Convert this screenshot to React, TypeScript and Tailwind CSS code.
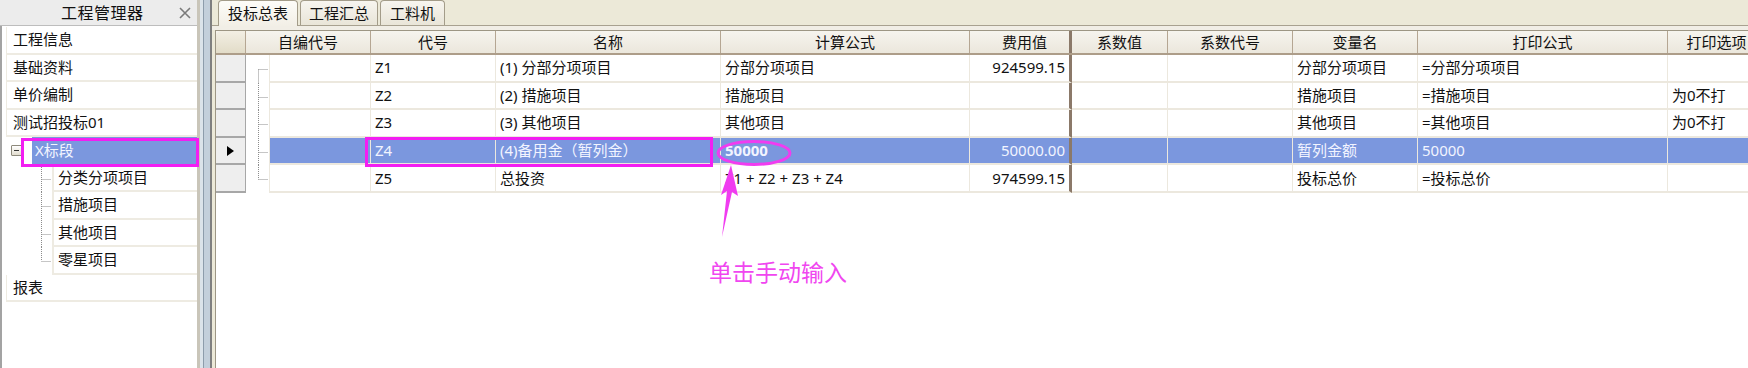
import React from "react";

type Row = {
  code: string;
  name: string;
  formula: string;
  value: string;
  varName: string;
  print: string;
  opt: string;
  sel?: boolean;
};

const rows: Row[] = [
  { code: "Z1", name: "(1) 分部分项项目", formula: "分部分项项目", value: "924599.15", varName: "分部分项项目", print: "=分部分项项目", opt: "" },
  { code: "Z2", name: "(2) 措施项目", formula: "措施项目", value: "", varName: "措施项目", print: "=措施项目", opt: "为0不打" },
  { code: "Z3", name: "(3) 其他项目", formula: "其他项目", value: "", varName: "其他项目", print: "=其他项目", opt: "为0不打" },
  { code: "Z4", name: "(4)备用金（暂列金）", formula: "50000", value: "50000.00", varName: "暂列金额", print: "50000", opt: "", sel: true },
  { code: "Z5", name: "总投资", formula: "Z1 + Z2 + Z3 + Z4", value: "974599.15", varName: "投标总价", print: "=投标总价", opt: "" },
];

const cellBase = "flex h-full shrink-0 items-center overflow-hidden whitespace-nowrap border-r border-b-2 border-[#ece8de] px-[4px]";

function TreeCell({ idx, total }: { idx: number; total: number }) {
  const mid = 14.5;
  return (
    <div className="relative h-full w-[24px] shrink-0 border-r border-[#ece8de] bg-white">
      <svg width="24" height="28" className="absolute left-0 top-0 overflow-visible">
        <line x1="12.5" y1={idx === 0 ? mid : 0} x2="12.5" y2={idx === total - 1 ? mid : 28} stroke="#8c8c8c" strokeWidth="1" strokeDasharray="1 1" />
        <line x1="12.5" y1={mid} x2="22" y2={mid} stroke="#8c8c8c" strokeWidth="1" strokeDasharray="1 1" />
      </svg>
    </div>
  );
}

function LeftRow({ children }: { children: React.ReactNode }) {
  return (
    <div className="flex h-[27.5px] items-center border-b-2 border-l border-[#eeebe2] bg-white pl-[6px]">
      {children}
    </div>
  );
}

function ChildRow({ children, idx, total }: { children: React.ReactNode; idx: number; total: number }) {
  return (
    <div className="flex h-[27.5px] bg-white">
      <div className="relative h-full w-[46px] shrink-0">
        <svg width="46" height="28" className="absolute left-0 top-0 overflow-visible">
          <line x1="35.5" y1="0" x2="35.5" y2={idx === total - 1 ? 14 : 28} stroke="#8c8c8c" strokeDasharray="1 1" />
          <line x1="35.5" y1="14.5" x2="45" y2="14.5" stroke="#8c8c8c" strokeDasharray="1 1" />
        </svg>
      </div>
      <div className="flex h-full flex-1 items-center border-b-2 border-l-2 border-[#eeebe2] pl-[4px]">{children}</div>
    </div>
  );
}

function LeftPane() {
  const kids = ["分类分项项目", "措施项目", "其他项目", "零星项目"];
  return (
    <div className="flex h-full w-[200px] shrink-0 flex-col border-r-[3px] border-[#c9c5b9] bg-white">
      <div className="flex h-[26px] shrink-0 items-center border-b border-[#bdbdbd] bg-[#ececec] pl-[61px] pr-[5px]">
        <span className="text-[16px] leading-none tracking-[0.5px] text-[#111]">工程管理器</span>
        <svg width="12" height="12" viewBox="0 0 12 12" className="ml-auto mr-[1px]">
          <path d="M1 1 L11 11 M11 1 L1 11" stroke="#7a7a7a" strokeWidth="1.6" />
        </svg>
      </div>
      <div className="flex flex-1 flex-col border-l-2 border-[#a3a3a3] pl-[4px] pt-px">
        <LeftRow>工程信息</LeftRow>
        <LeftRow>基础资料</LeftRow>
        <LeftRow>单价编制</LeftRow>
        <LeftRow>测试招投标01</LeftRow>
        <div className="flex h-[27.5px] items-center bg-white">
          <div className="relative flex h-full w-[24px] shrink-0 items-center">
            <div className="ml-[5px] flex h-[11px] w-[11px] items-center justify-center rounded-[1px] border border-[#8e8a7c] bg-gradient-to-b from-[#ffffff] to-[#e2ddcf]">
              <div className="h-px w-[5px] bg-[#333]" />
            </div>
          </div>
          <div className="flex h-full flex-1 items-center border-l-2 border-white bg-[#7b97de] pl-[3px] text-[#f3f5ff]">X标段</div>
        </div>
        {kids.map((k, i) => (
          <ChildRow key={k} idx={i} total={kids.length}>
            {k}
          </ChildRow>
        ))}
        <LeftRow>报表</LeftRow>
      </div>
    </div>
  );
}

function Splitter() {
  return (
    <div className="flex h-full w-[12px] shrink-0">
      <div className="h-full w-[3px] bg-[#dbe3ea]" />
      <div className="h-full w-px bg-[#8d9cab]" />
      <div className="h-full w-[6px] bg-[#c3cfdb]" />
      <div className="h-full w-[2px] bg-[#7f7f7f]" />
    </div>
  );
}

function HeaderCell({ w, children, thick }: { w: string; children?: React.ReactNode; thick?: boolean }) {
  return (
    <div
      className={`flex h-full shrink-0 items-center justify-center whitespace-nowrap ${w} ${
        thick ? "border-r-[3px] border-[#8b7969]" : "border-r border-[#b5a692]"
      }`}
    >
      {children}
    </div>
  );
}

function Grid() {
  return (
    <div className="ml-[3px] flex flex-1 flex-col border-l border-t border-[#9d9684] bg-white">
      <div className="flex h-[24px] shrink-0 border-b-2 border-[#ad9d89] bg-gradient-to-b from-[#f6f4ee] to-[#ebe7dc]">
        <div className="h-full w-[30px] shrink-0 rounded-tl-[5px] border-r border-[#b5a692] bg-gradient-to-b from-[#f3efe4] to-[#e2dcc8]" />
        <HeaderCell w="w-[125px]">自编代号</HeaderCell>
        <HeaderCell w="w-[125px]">代号</HeaderCell>
        <HeaderCell w="w-[225px]">名称</HeaderCell>
        <HeaderCell w="w-[249px]">计算公式</HeaderCell>
        <HeaderCell w="w-[102px]" thick>
          <span className="pl-[10px]">费用值</span>
        </HeaderCell>
        <HeaderCell w="w-[96px]">系数值</HeaderCell>
        <HeaderCell w="w-[125px]">系数代号</HeaderCell>
        <HeaderCell w="w-[125px]">变量名</HeaderCell>
        <HeaderCell w="w-[250px]">打印公式</HeaderCell>
        <HeaderCell w="w-[98px]">打印选项</HeaderCell>
      </div>
      {rows.map((r, i) => {
        const bg = r.sel ? "bg-[#7b97de] text-[#f2f4ff]" : "bg-white";
        return (
          <div key={r.code} className="flex h-[27.6px] shrink-0">
            <div className="relative flex h-full w-[30px] shrink-0 items-center justify-center border-b-2 border-r border-[#a7a7a7] bg-[#eeeeee]">
              {r.sel && (
                <svg width="7" height="10" viewBox="0 0 7 10">
                  <path d="M0 0 L7 5 L0 10 Z" fill="#000" />
                </svg>
              )}
            </div>
            <TreeCell idx={i} total={rows.length} />
            <div className={`${cellBase} w-[101px] ${bg}`} />
            <div className={`${cellBase} w-[125px] ${bg}`}>{r.code}</div>
            <div className={`${cellBase} w-[225px] ${bg}`}>{r.name}</div>
            <div className={`${cellBase} w-[249px] ${bg} ${r.sel ? "font-bold" : ""}`}>{r.formula}</div>
            <div className={`flex h-full w-[102px] shrink-0 items-center justify-end border-b-2 border-r-[3px] border-b-[#ece8de] border-r-[#8b7969] pr-[4px] ${bg} ${r.sel ? "text-[#dfe6fb]" : ""}`}>
              {r.value}
            </div>
            <div className={`${cellBase} w-[96px] ${bg}`} />
            <div className={`${cellBase} w-[125px] ${bg}`} />
            <div className={`${cellBase} w-[125px] ${bg}`}>{r.varName}</div>
            <div className={`${cellBase} w-[250px] ${bg}`}>{r.print}</div>
            <div className={`${cellBase} w-[98px] ${bg}`}>{r.opt}</div>
          </div>
        );
      })}
      <div className="flex-1 bg-white" />
    </div>
  );
}

function RightPane() {
  return (
    <div className="flex h-full w-[1536px] shrink-0 flex-col bg-[#ece9d8]">
      <div className="flex h-[26px] shrink-0 items-end gap-[2px] border-b border-[#a8a190] pl-[6px]">
        <div className="-mb-px flex h-[26px] w-[80px] items-center justify-center rounded-t-[4px] border border-b-0 border-[#a39c89] bg-gradient-to-b from-[#fdfcf8] to-[#f2efe6]">
          投标总表
        </div>
        <div className="flex h-[25px] w-[78px] items-center justify-center rounded-t-[4px] border border-b-0 border-[#a39c89] bg-gradient-to-b from-[#f7f5ef] to-[#e9e5d8]">
          工程汇总
        </div>
        <div className="flex h-[25px] w-[65px] items-center justify-center rounded-t-[4px] border border-b-0 border-[#a39c89] bg-gradient-to-b from-[#f7f5ef] to-[#e9e5d8]">
          工料机
        </div>
      </div>
      <div className="h-[4px] shrink-0 bg-[#f1eee6]" />
      <Grid />
    </div>
  );
}

export default function App() {
  return (
    <div className="relative flex h-[368px] w-[1748px] overflow-hidden bg-white font-['Noto_Sans','Noto_Sans_CJK_SC',sans-serif] text-[15px] leading-none text-[#111]">
      <LeftPane />
      <Splitter />
      <RightPane />
      <svg width="1748" height="368" className="pointer-events-none absolute left-0 top-0">
        <rect x="22.5" y="139.5" width="175" height="26" fill="none" stroke="#f21ef2" strokeWidth="3" />
        <rect x="366.5" y="138.5" width="345" height="27" fill="none" stroke="#f21ef2" strokeWidth="3" />
        <ellipse cx="754" cy="153" rx="36" ry="11.5" fill="none" stroke="#f03cf0" strokeWidth="3" />
        <polygon points="731,165 738,196 732,192 722,237 727,191 721,195" fill="#f03cf0" />
      </svg>
      <div className="absolute left-[709px] top-[261px] text-[23px] leading-none text-[#f046f0]">单击手动输入</div>
    </div>
  );
}
